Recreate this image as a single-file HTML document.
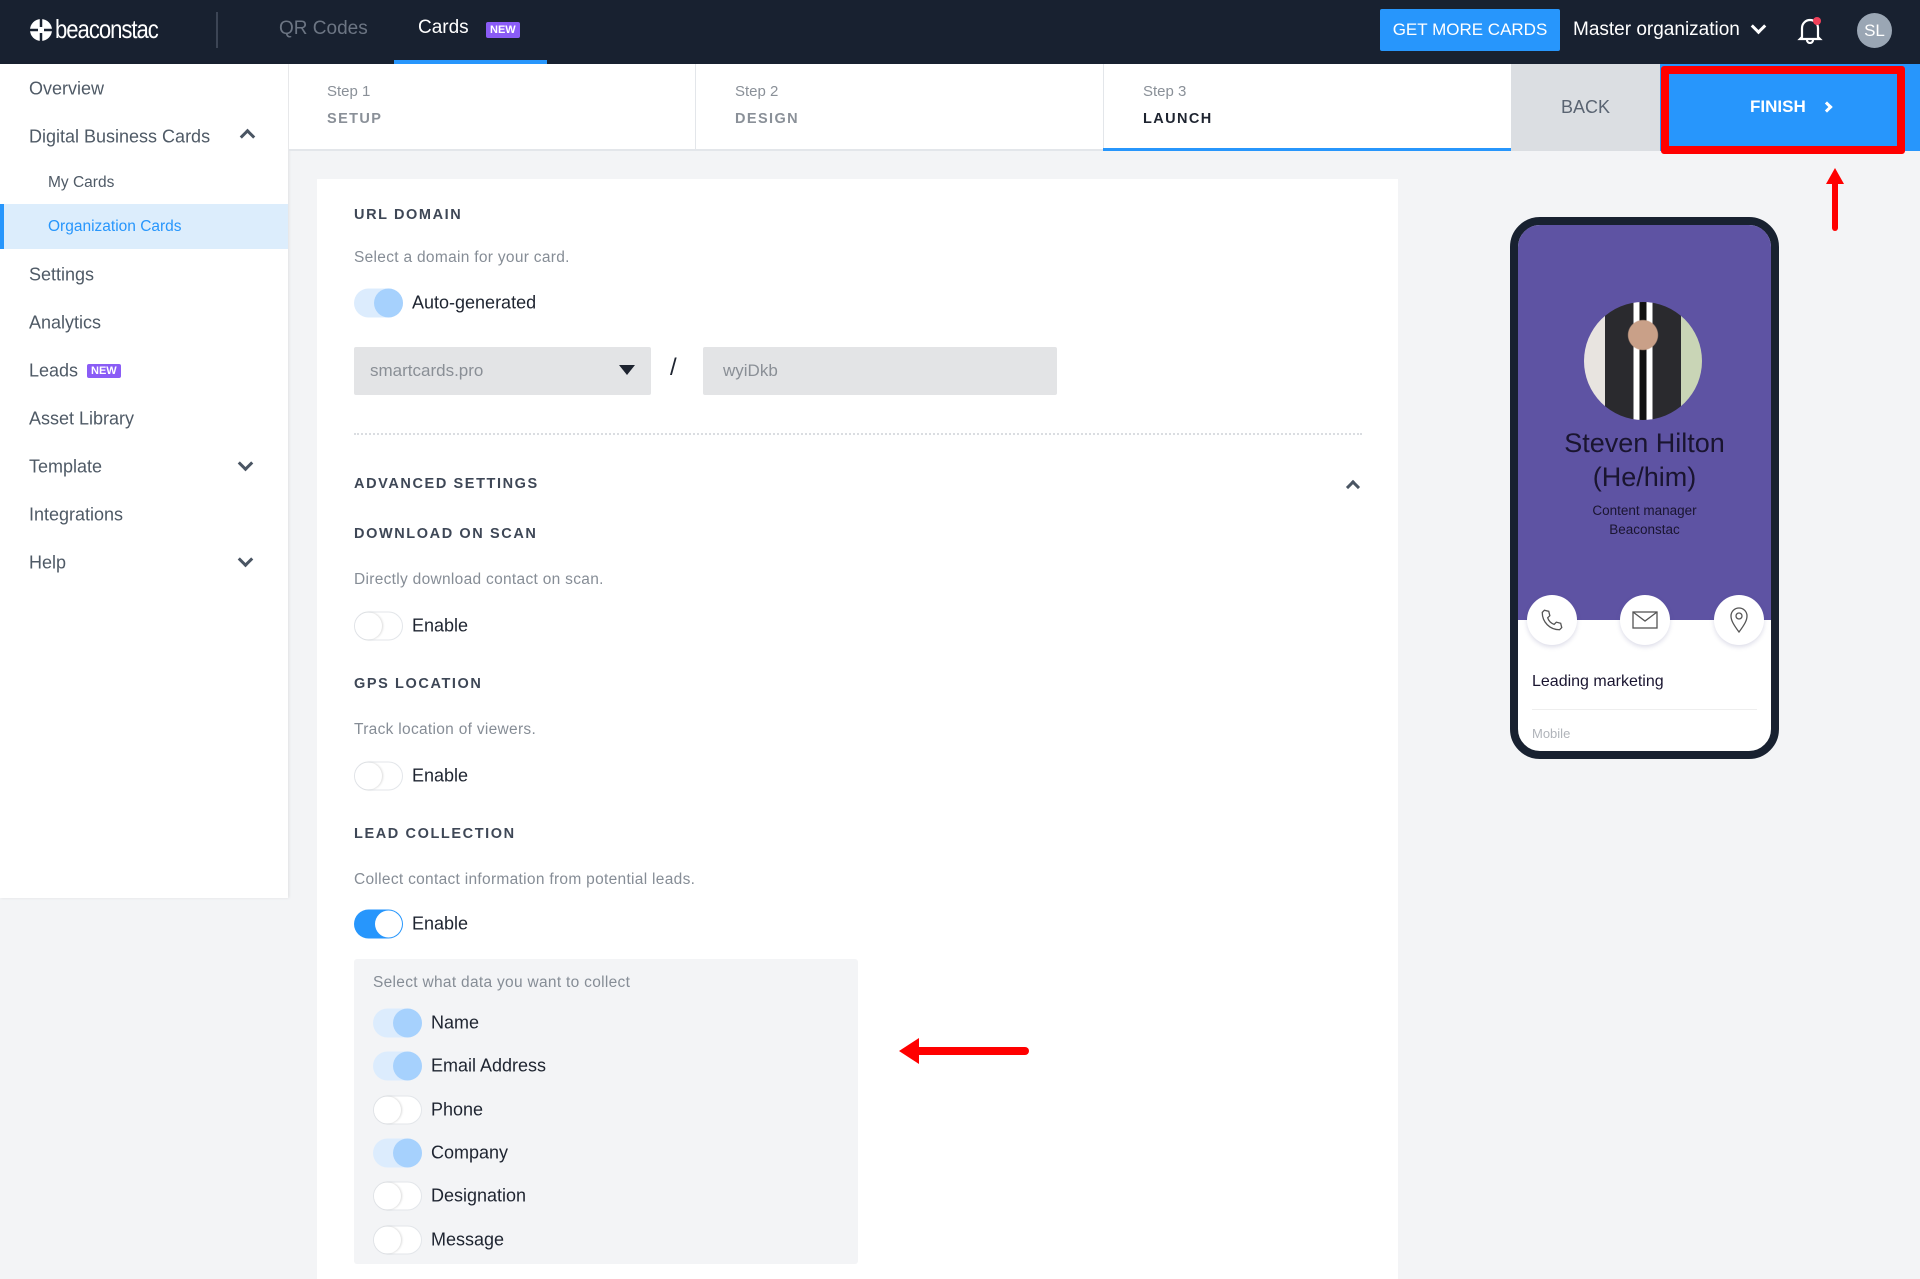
<!DOCTYPE html>
<html><head><meta charset="utf-8"><style>
*{margin:0;padding:0;box-sizing:border-box}
body{width:1920px;height:1278px;background:#f3f4f6;font-family:"Liberation Sans",sans-serif;position:relative;overflow:hidden;color:#1e2430}
.a{position:absolute;white-space:nowrap}
.top{left:0;top:0;width:1920px;height:64px;background:#182130}
.side{left:0;top:64px;width:288px;height:834px;background:#fff;box-shadow:1px 0 3px rgba(0,0,0,.08)}
.si{left:29px;font-size:18px;color:#4f5a66;transform:translateY(-50%)}
.hd{font-size:14.5px;font-weight:bold;letter-spacing:1.6px;color:#3e4756;transform:translateY(-50%)}
.ds{font-size:15.5px;color:#868d96;letter-spacing:.3px;transform:translateY(-50%)}
.lb{font-size:18px;color:#1e2430;transform:translateY(-50%)}
.tg{width:49px;height:29px;border-radius:15px;transform:translateY(-50%)}
.on{background:#dcecfd}
.on::after{content:"";position:absolute;right:0;top:0;width:29px;height:29px;border-radius:50%;background:#a6d1fd}
.off{background:#fff;border:1px solid #e3e6ea}
.off::after{content:"";position:absolute;left:0;top:0;width:27px;height:27px;border-radius:50%;background:#fff;box-shadow:1px 0 2px rgba(0,0,0,.15)}
.chev{width:11px;height:11px;border-right:3px solid #4a5563;border-bottom:3px solid #4a5563}
.ic{width:50px;height:50px;border-radius:50%;background:#fff;box-shadow:0 2px 5px rgba(80,80,140,.2);display:flex;align-items:center;justify-content:center}
</style></head><body>
<div class="a top"></div>
<svg class="a" style="left:29px;top:18px" width="24" height="24" viewBox="0 0 24 24"><circle cx="12" cy="12" r="11" fill="#fff"/><path d="M12 1v8M12 15v8M1 12h8M15 12h8" stroke="#182130" stroke-width="2.5"/></svg>
<div class="a" style="left:55px;top:14px;font-size:26px;color:#fff;letter-spacing:-1.2px;transform:scaleX(.85);transform-origin:left">beaconstac</div>
<div class="a" style="left:216px;top:12px;width:2px;height:36px;background:#3c4555"></div>
<div class="a" style="left:279px;top:18px;font-size:19px;color:#6c7583">QR Codes</div>
<div class="a" style="left:418px;top:17px;font-size:19px;color:#fff">Cards</div>
<div class="a" style="left:486px;top:22px;background:#8a5cf6;color:#fff;font-size:11px;font-weight:bold;padding:2px 4px;border-radius:2px">NEW</div>
<div class="a" style="left:394px;top:60px;width:153px;height:4px;background:#2796fc"></div>
<div class="a" style="left:1380px;top:9px;width:180px;height:42px;background:#2796fc;border-radius:2px;color:#fff;font-size:17px;text-align:center;line-height:42px">GET MORE CARDS</div>
<div class="a" style="left:1573px;top:19px;font-size:19px;color:#fff">Master organization</div>
<div class="a chev" style="left:1753px;top:21px;border-color:#fff;transform:rotate(45deg)"></div>
<svg class="a" style="left:1797px;top:16px" width="26" height="28" viewBox="0 0 26 28"><path d="M5 21V12a8 8 0 0116 0v9l2 2H3z M10 24a3 3 0 006 0" fill="none" stroke="#fff" stroke-width="2.2"/><circle cx="20" cy="5" r="4" fill="#f0405a"/></svg>
<div class="a" style="left:1857px;top:13px;width:35px;height:35px;border-radius:50%;background:#9aa6b4;color:#fff;font-size:17px;text-align:center;line-height:35px">SL</div>

<div class="a side"></div>
<div class="a si" style="top:89px">Overview</div>
<div class="a si" style="top:137px">Digital Business Cards</div>
<div class="a chev" style="left:242px;top:131px;transform:rotate(-135deg)"></div>
<div class="a si" style="left:48px;top:183px;font-size:15.5px">My Cards</div>
<div class="a" style="left:0;top:204px;width:288px;height:45px;background:#dcedfc;border-left:4px solid #2796fc"></div>
<div class="a si" style="left:48px;top:227px;font-size:15.5px;color:#2796fc">Organization Cards</div>
<div class="a si" style="top:275px">Settings</div>
<div class="a si" style="top:323px">Analytics</div>
<div class="a si" style="top:371px">Leads</div>
<div class="a" style="left:87px;top:364px;background:#8a5cf6;color:#fff;font-size:11px;font-weight:bold;padding:1px 4px;border-radius:2px">NEW</div>
<div class="a si" style="top:467px">Template</div>
<div class="a chev" style="left:240px;top:458px;transform:rotate(45deg)"></div>
<div class="a si" style="top:419px">Asset Library</div>
<div class="a si" style="top:515px">Integrations</div>
<div class="a si" style="top:563px">Help</div>
<div class="a chev" style="left:240px;top:554px;transform:rotate(45deg)"></div>

<div class="a" style="left:289px;top:64px;width:1222px;height:87px;background:#fff;border-bottom:2px solid #e3e6ea"></div>
<div class="a" style="left:695px;top:64px;width:1px;height:87px;background:#e3e6ea"></div>
<div class="a" style="left:1103px;top:64px;width:1px;height:87px;background:#e3e6ea"></div>
<div class="a" style="left:1103px;top:148px;width:408px;height:3px;background:#2796fc"></div>
<div class="a" style="left:327px;top:83px;font-size:15px;color:#8a9098">Step 1</div>
<div class="a" style="left:327px;top:111px;font-size:14.5px;font-weight:bold;letter-spacing:1.4px;color:#8a9098">SETUP</div>
<div class="a" style="left:735px;top:83px;font-size:15px;color:#8a9098">Step 2</div>
<div class="a" style="left:735px;top:111px;font-size:14.5px;font-weight:bold;letter-spacing:1.4px;color:#8a9098">DESIGN</div>
<div class="a" style="left:1143px;top:83px;font-size:15px;color:#8a9098">Step 3</div>
<div class="a" style="left:1143px;top:111px;font-size:14.5px;font-weight:bold;letter-spacing:1.4px;color:#1e2430">LAUNCH</div>
<div class="a" style="left:1511px;top:64px;width:149px;height:87px;background:#dbdee2;color:#5a6472;font-size:18px;text-align:center;line-height:87px">BACK</div>
<div class="a" style="left:1660px;top:64px;width:260px;height:87px;background:#2796fc"></div>
<div class="a" style="left:1661px;top:66px;width:244px;height:88px;border:8px solid #ff0000;border-radius:3px"></div>
<div class="a" style="left:1750px;top:97px;font-size:17px;font-weight:bold;color:#fff">FINISH</div>
<div class="a chev" style="left:1823px;top:103px;width:8px;height:8px;border-color:#fff;transform:rotate(-45deg)"></div>
<svg class="a" style="left:1824px;top:166px" width="22" height="66" viewBox="0 0 22 66"><path d="M11 62V14" stroke="#ff0000" stroke-width="6" stroke-linecap="round"/><path d="M2 18L11 2 20 18z" fill="#ff0000"/></svg>

<div class="a" style="left:317px;top:179px;width:1081px;height:1100px;background:#fff"></div>
<div class="a hd" style="left:354px;top:215px">URL DOMAIN</div>
<div class="a ds" style="left:354px;top:258px">Select a domain for your card.</div>
<div class="a tg on" style="left:354px;top:303px"></div>
<div class="a lb" style="left:412px;top:303px">Auto-generated</div>
<div class="a" style="left:354px;top:347px;width:297px;height:48px;background:#e3e4e6;border-radius:2px"></div>
<div class="a" style="left:370px;top:361px;font-size:17px;color:#8a8f96">smartcards.pro</div>
<svg class="a" style="left:619px;top:365px" width="16" height="10"><path d="M0 0h16L8 10z" fill="#1e2430"/></svg>
<div class="a" style="left:670px;top:354px;font-size:24px;color:#1e2430">/</div>
<div class="a" style="left:703px;top:347px;width:354px;height:48px;background:#e3e4e6;border-radius:2px"></div>
<div class="a" style="left:723px;top:361px;font-size:17px;color:#8a8f96">wyiDkb</div>
<div class="a" style="left:354px;top:433px;width:1008px;border-top:2px dotted #dadde1"></div>
<div class="a hd" style="left:354px;top:484px">ADVANCED SETTINGS</div>
<div class="a chev" style="left:1348px;top:482px;width:10px;height:10px;transform:rotate(-135deg)"></div>
<div class="a hd" style="left:354px;top:534px">DOWNLOAD ON SCAN</div>
<div class="a ds" style="left:354px;top:580px">Directly download contact on scan.</div>
<div class="a tg off" style="left:354px;top:626px"></div>
<div class="a lb" style="left:412px;top:626px">Enable</div>
<div class="a hd" style="left:354px;top:684px">GPS LOCATION</div>
<div class="a ds" style="left:354px;top:730px">Track location of viewers.</div>
<div class="a tg off" style="left:354px;top:776px"></div>
<div class="a lb" style="left:412px;top:776px">Enable</div>
<div class="a hd" style="left:354px;top:834px">LEAD COLLECTION</div>
<div class="a ds" style="left:354px;top:880px">Collect contact information from potential leads.</div>
<div class="a tg" style="left:354px;top:924px;background:#2796fc"><div style="position:absolute;right:1px;top:1px;width:27px;height:27px;border-radius:50%;background:#fff"></div></div>
<div class="a lb" style="left:412px;top:924px">Enable</div>
<div class="a" style="left:354px;top:959px;width:504px;height:305px;background:#f3f4f6;border-radius:3px"></div>
<div class="a ds" style="left:373px;top:983px">Select what data you want to collect</div>
<div class="a tg on" style="left:373px;top:1023px"></div><div class="a lb" style="left:431px;top:1023px">Name</div>
<div class="a tg on" style="left:373px;top:1066px"></div><div class="a lb" style="left:431px;top:1066px">Email Address</div>
<div class="a tg off" style="left:373px;top:1110px"></div><div class="a lb" style="left:431px;top:1110px">Phone</div>
<div class="a tg on" style="left:373px;top:1153px"></div><div class="a lb" style="left:431px;top:1153px">Company</div>
<div class="a tg off" style="left:373px;top:1196px"></div><div class="a lb" style="left:431px;top:1196px">Designation</div>
<div class="a tg off" style="left:373px;top:1240px"></div><div class="a lb" style="left:431px;top:1240px">Message</div>
<svg class="a" style="left:897px;top:1036px" width="134" height="30" viewBox="0 0 134 30"><path d="M20 15h108" stroke="#ff0000" stroke-width="8" stroke-linecap="round"/><path d="M2 15L22 2v26z" fill="#ff0000"/></svg>

<div class="a" style="left:1510px;top:217px;width:269px;height:542px;border:8px solid #182130;border-radius:30px;background:#fff;overflow:hidden">
<div style="position:absolute;left:0;top:0;width:100%;height:395px;background:#5e53a3"></div>
<div style="position:absolute;left:66px;top:77px;width:118px;height:118px;border-radius:50%;background:radial-gradient(circle at 50% 28%,#c9a088 0 14%,transparent 15%),linear-gradient(90deg,#e8e4e0 0 18%,#2a2a2e 18% 42%,#fff 42% 47%,#111 47% 53%,#fff 53% 58%,#2a2a2e 58% 82%,#c9d5b6 82%)"></div>
<div style="position:absolute;left:0;width:100%;top:201px;text-align:center;font-size:27px;line-height:34px;color:#1a1530">Steven Hilton<br>(He/him)</div>
<div style="position:absolute;left:0;width:100%;top:276px;text-align:center;font-size:13.5px;line-height:19px;color:#1a1530">Content manager<br>Beaconstac</div>
<div class="ic" style="position:absolute;left:9px;top:370px"><svg width="26" height="26" viewBox="0 0 24 24"><path d="M5 3l4 1 1 4-2 2c1 3 3 5 6 6l2-2 4 1 1 4-2 2C10 21 3 14 3 5z" fill="none" stroke="#555" stroke-width="1.2"/></svg></div>
<div class="ic" style="position:absolute;left:102px;top:370px"><svg width="26" height="20" viewBox="0 0 26 20"><rect x="1" y="2" width="24" height="16" fill="none" stroke="#555" stroke-width="1.3"/><path d="M1 2l12 9 12-9" fill="none" stroke="#555" stroke-width="1.3"/></svg></div>
<div class="ic" style="position:absolute;left:196px;top:370px"><svg width="20" height="26" viewBox="0 0 20 26"><path d="M10 25C4 17 2 13 2 9a8 8 0 0116 0c0 4-2 8-8 16z" fill="none" stroke="#555" stroke-width="1.3"/><circle cx="10" cy="9" r="3" fill="none" stroke="#555" stroke-width="1.3"/></svg></div>
<div style="position:absolute;left:14px;top:448px;font-size:16px;color:#1a1530">Leading marketing</div>
<div style="position:absolute;left:14px;right:14px;top:484px;border-top:1px solid #eee"></div>
<div style="position:absolute;left:14px;top:501px;font-size:13px;color:#b0b4ba">Mobile</div>
</div>
</body></html>
